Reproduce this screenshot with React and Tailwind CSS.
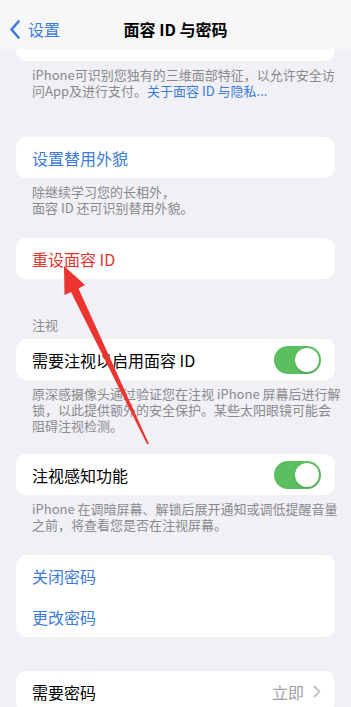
import React from "react";

const font = { fontFamily: '"Noto Sans CJK SC", "Noto Sans", sans-serif' };

function Card({ children, className = "" }) {
  return <div className={`mx-4 rounded-[10px] bg-white ${className}`}>{children}</div>;
}

function Row({ children, color = "text-black", right }) {
  return (
    <div className="flex h-[41px] items-center justify-between pl-4 pr-[14px]">
      <span className={`whitespace-nowrap text-[16px] leading-none ${color}`}>{children}</span>
      {right}
    </div>
  );
}

function Footer({ lines, className = "" }) {
  return (
    <div className={`flex flex-col pl-8 pr-1 text-[13px] leading-[16px] text-[#8a8a8e] ${className}`}>
      {lines.map((l, i) => (
        <span key={i} className="whitespace-nowrap">
          {l}
        </span>
      ))}
    </div>
  );
}

function Toggle() {
  return (
    <div className="relative h-[28px] w-[47px] rounded-full bg-[#5bbf60]">
      <div className="absolute right-[2px] top-[2px] h-[24px] w-[24px] rounded-full bg-white shadow-[0_1px_2px_rgba(0,0,0,0.2)]" />
    </div>
  );
}

export default function App() {
  return (
    <div className="relative h-[707px] w-[351px] overflow-hidden bg-[#f0f0f5]" style={font}>
      {/* nav */}
      <div className="relative flex h-[49px] items-end bg-[#f7f7f9] pb-[10px]">
        <div className="flex items-center pl-[9px] text-[#3a7bdc]">
          <svg width="12" height="19" viewBox="0 0 12 19" className="mr-[7px]">
            <path d="M9.5 1.5 L2.5 9.5 L9.5 17.5" fill="none" stroke="#3a7bdc" strokeWidth="2.6" strokeLinecap="round" strokeLinejoin="round" />
          </svg>
          <span className="text-[16px] leading-[20px]">设置</span>
        </div>
        <div className="absolute bottom-[10px] left-0 right-0 text-center text-[16px] font-semibold leading-[20px] text-black">
          面容 ID 与密码
        </div>
      </div>

      {/* top card stub */}
      <div className="mx-4 h-[12px] rounded-b-[10px] bg-white" />
      <Footer
        className="pt-[6px]"
        lines={[
          "iPhone可识别您独有的三维面部特征，以允许安全访",
          <>
            问App及进行支付。<span className="text-[#3a7bdc]">关于面容 ID 与隐私...</span>
          </>,
        ]}
      />

      <Card className="mt-[38px]">
        <Row color="text-[#3a7bdc]">设置替用外貌</Row>
      </Card>
      <Footer className="pt-[6px]" lines={["除继续学习您的长相外，", "面容 ID 还可识别替用外貌。"]} />

      <Card className="mt-[22px]">
        <Row color="text-[#e0352d]">重设面容 ID</Row>
      </Card>

      <div className="mt-[38px] px-8 text-[13px] leading-[16px] text-[#8a8a8e]">注视</div>
      <Card className="mt-[6px]">
        <Row right={<Toggle />}>需要注视以启用面容 ID</Row>
      </Card>
      <Footer
        className="pt-[6px]"
        lines={[
          "原深感摄像头通过验证您在注视 iPhone 屏幕后进行解",
          "锁，以此提供额外的安全保护。某些太阳眼镜可能会",
          "阻碍注视检测。",
        ]}
      />

      <Card className="mt-[20px]">
        <Row right={<Toggle />}>注视感知功能</Row>
      </Card>
      <Footer
        className="pt-[6px]"
        lines={["iPhone 在调暗屏幕、解锁后展开通知或调低提醒音量", "之前，将查看您是否在注视屏幕。"]}
      />

      <Card className="mt-[22px]">
        <Row color="text-[#3a7bdc]">关闭密码</Row>
        <Row color="text-[#3a7bdc]">更改密码</Row>
      </Card>

      <Card className="mt-[34px]">
        <Row
          right={
            <div className="flex items-center gap-[9px] text-[16px] leading-none text-[#a0a0a5]">
              <span>立即</span>
              <svg width="8" height="13" viewBox="0 0 8 13">
                <path d="M1.5 1.5 L6.5 6.5 L1.5 11.5" fill="none" stroke="#c4c4c8" strokeWidth="2" strokeLinecap="round" strokeLinejoin="round" />
              </svg>
            </div>
          }
        >
          需要密码
        </Row>
      </Card>

      {/* annotation arrow */}
      <svg className="pointer-events-none absolute left-0 top-0" width="351" height="707" viewBox="0 0 351 707">
        <polygon points="64,266 85,285 78.5,288.5 149,444 147,444 71,292 64.5,295" fill="#ee3431" />
      </svg>
    </div>
  );
}
